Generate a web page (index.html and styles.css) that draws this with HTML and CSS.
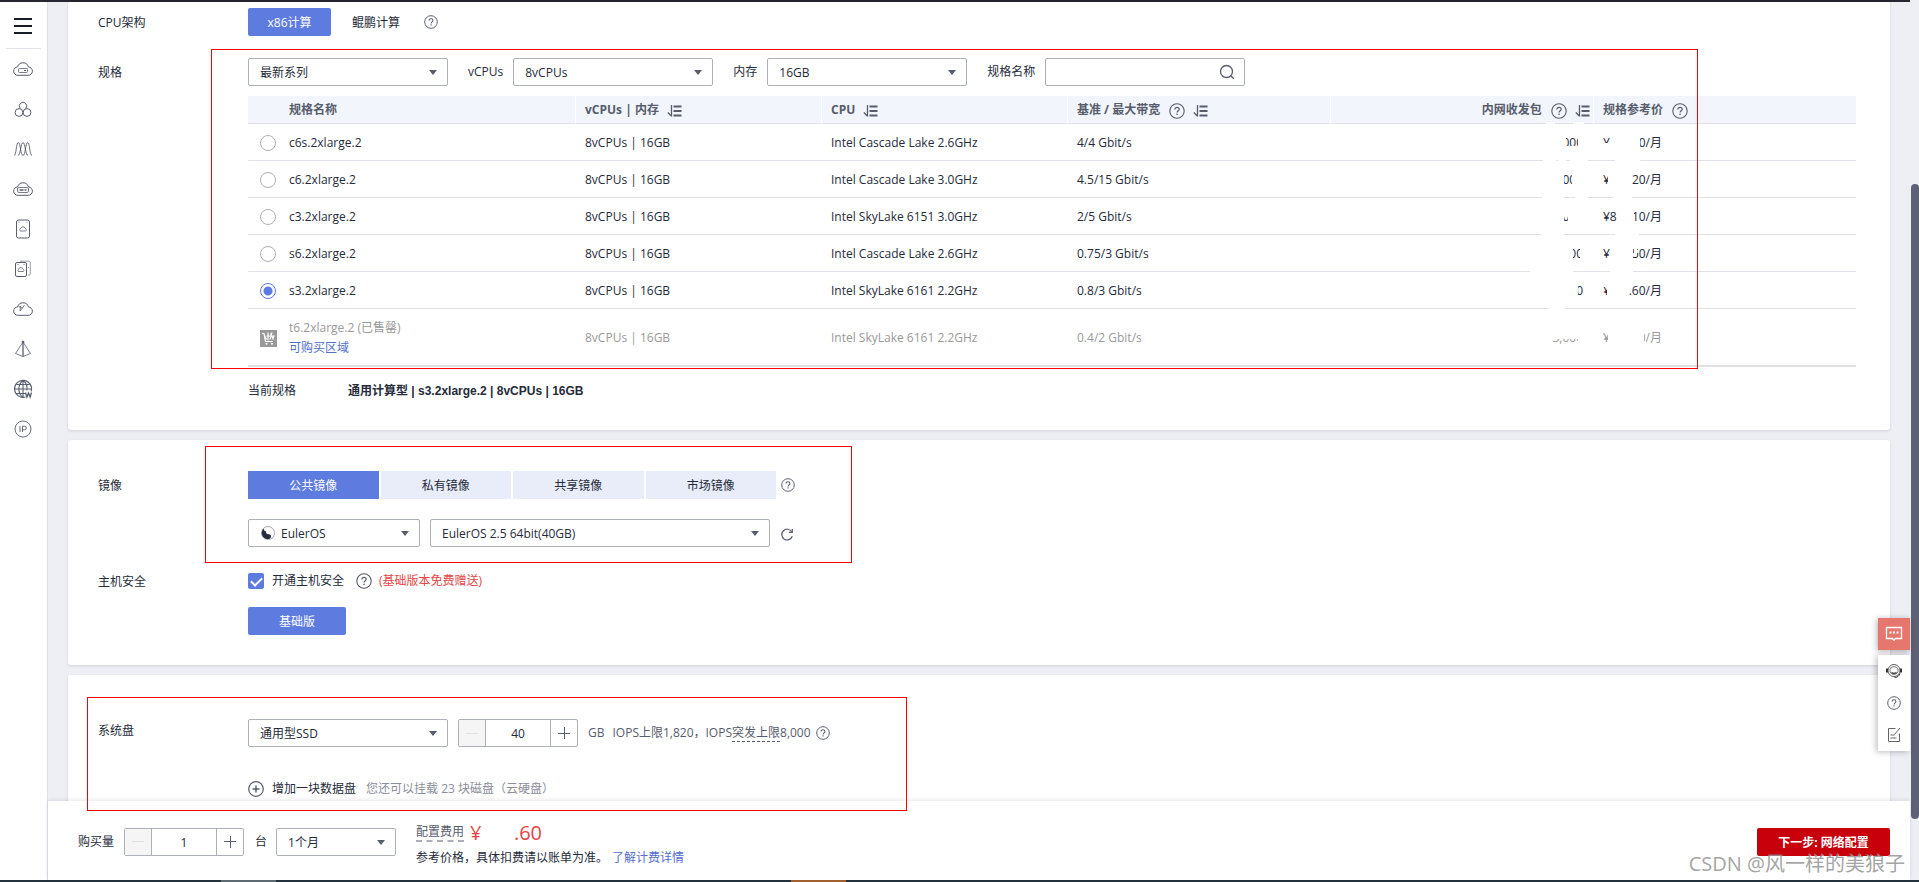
FILE: index.html
```html
<!DOCTYPE html>
<html lang="zh-CN">
<head>
<meta charset="utf-8">
<title>购买弹性云服务器</title>
<link rel="stylesheet" href="styles.css">
</head>
<body>
<svg class="defs" aria-hidden="true">
  <symbol id="help" viewBox="0 0 16 16"><circle cx="8" cy="8" r="7.2" fill="none" stroke="currentColor" stroke-width="1.1"/><path d="M5.8 6.4c0-1.3 1-2.1 2.2-2.1s2.2.8 2.2 2c0 1.5-2.1 1.6-2.1 3.3" fill="none" stroke="currentColor" stroke-width="1.2"/><rect x="7.4" y="10.6" width="1.3" height="1.4" fill="currentColor"/></symbol>
  <symbol id="sort" viewBox="0 0 15 12"><path d="M4.500 0v11.500M.8 7.500l3.500 3.500" fill="none" stroke="currentColor" stroke-width="1.300"/><path d="M6.500 1.500h8M6.500 6h8M6.500 10.500h8" fill="none" stroke="currentColor" stroke-width="1.800"/></symbol>
  <symbol id="cloud" viewBox="0 0 20 16"><path d="M5 14.300A4.200 4.200 0 0 1 4.600 5.900 5.600 5.600 0 0 1 15.400 5.900 4.200 4.200 0 0 1 15 14.300z" fill="none" stroke="currentColor"/></symbol>
</svg>
<div class="topline"></div>
<div class="shell">
  <nav class="sidebar" aria-label="服务列表">
    <button class="menu" aria-label="菜单"><svg width="18" height="16" viewBox="0 0 18 16"><path d="M0 1h18M0 8h18M0 15h18" stroke="#191b27" stroke-width="2"/></svg></button>
    <a href="#" aria-label="弹性云服务器"><svg width="20" height="16"><use href="#cloud"/><rect x="5.500" y="7.500" width="9" height="4" rx="1" fill="none" stroke="currentColor" stroke-width=".8"/><path d="M11 9.500h2" stroke="currentColor"/></svg></a>
    <a href="#" aria-label="弹性伸缩"><svg width="18" height="18" viewBox="0 0 18 18" fill="none" stroke="currentColor"><path d="M6.300 8.500A3.700 3.700 0 1 1 11.700 8.500"/><circle cx="5" cy="12.500" r="3.900"/><circle cx="13" cy="12.500" r="3.900"/></svg></a>
    <a href="#" aria-label="云监控"><svg width="20" height="16" viewBox="0 0 20 16" fill="none" stroke="currentColor" stroke-width=".9"><path d="M1 14.500C3.500 14.500 3 1.500 5.300 1.500S7.500 14.500 10 14.500 12.500 1.500 14.700 1.500 16.500 14.500 19 14.500"/><path d="M5 14.500C7.500 14.500 7.800 1.500 10 1.500S12.500 14.500 15 14.500"/></svg></a>
    <a href="#" aria-label="裸金属服务器"><svg width="20" height="16"><use href="#cloud"/><rect x="4.500" y="6.500" width="11" height="5" rx="1.500" fill="none" stroke="currentColor" stroke-width=".8"/><path d="M6.500 9h7" stroke="currentColor" stroke-width="1.600" stroke-dasharray="4 1"/></svg></a>
    <a href="#" aria-label="云硬盘"><svg width="16" height="20" viewBox="0 0 16 20" fill="none" stroke="currentColor"><rect x="1.500" y="1" width="13" height="18" rx="2"/><path d="M5.500 12a1.500 1.500 0 0 1 .2-2.700 2.500 2.500 0 0 1 4.600 0 1.500 1.500 0 0 1 .2 2.700z" stroke-width=".8"/><path d="M3.500 3h1M11.500 3h1" stroke-width=".8"/></svg></a>
    <a href="#" aria-label="云硬盘备份"><svg width="18" height="18" viewBox="0 0 18 18" fill="none" stroke="currentColor"><rect x="1.500" y="2.500" width="11" height="14" rx="1.500"/><path d="M4.500 11.500a1.300 1.300 0 0 1 .2-2.300 2.300 2.300 0 0 1 4.400 0 1.300 1.300 0 0 1 .2 2.300zM3.500 4.500h1M9.500 4.500h1" stroke-width=".8"/><path d="M6 1.200h9a1.300 1.300 0 0 1 1.300 1.300v11.500a1 1 0 0 1-1 1H14M14 7.500h1" stroke-width=".6"/></svg></a>
    <a href="#" aria-label="云备份"><svg width="20" height="16"><use href="#cloud"/><path d="M5.500 5.500l4 1.500-2.500 3M7 10l.5-5M9.500 7l2-3" fill="none" stroke="currentColor" stroke-width=".8"/></svg></a>
    <a href="#" aria-label="虚拟私有云"><svg width="18" height="18" viewBox="0 0 18 18" fill="none" stroke="currentColor" stroke-width=".8"><path d="M9 2L1.500 13.500 9 16.500l7.500-3z"/><path d="M9 2v14.500" stroke-width="1.300"/><circle cx="9" cy="2" r="1" fill="currentColor"/></svg></a>
    <a href="#" aria-label="域名"><svg width="20" height="20" viewBox="0 0 20 20" fill="none" stroke="currentColor" stroke-width="1.100"><path d="M12.500 18A8.500 8.500 0 1 1 18.200 12.300"/><path d="M10 1.500v17M1.500 10h17M3.300 5.500h13.400M3.300 14.500h9M10 1.500c-5.500 4-5.500 13 0 17M10 1.500c3.500 2.500 4.500 6.500 3.800 10"/><path d="M12.500 13.500l1.400 4.500 1.600-4 1.600 4 1.400-4.500" stroke-width="1.300"/></svg></a>
    <a href="#" aria-label="弹性公网IP"><svg width="18" height="18" viewBox="0 0 18 18" fill="none" stroke="currentColor" stroke-width=".9"><circle cx="9" cy="9" r="8"/><path d="M6 6v6M8.500 12V6.200h2a1.800 1.800 0 0 1 0 3.600h-2"/></svg></a>
  </nav>
  <div class="column">
    <main class="content">
      <section class="card card-spec">
        <div class="row">
          <span class="label">CPU架构</span>
          <div class="field line">
            <button class="btn primary arch">x86计算</button><button class="btn plain">鲲鹏计算</button>
            <svg class="help small"><use href="#help"/></svg>
          </div>
        </div>
        <div class="row">
          <span class="label">规格</span>
          <div class="field">
            <div class="line filters">
              <span class="select w200"><select aria-label="系列"><option>最新系列</option></select></span>
              <label for="vcpus">vCPUs</label>
              <span class="select w200"><select id="vcpus"><option>8vCPUs</option></select></span>
              <label for="mem">内存</label>
              <span class="select w200"><select id="mem"><option>16GB</option></select></span>
              <label for="flavor">规格名称</label>
              <span class="search w200"><input id="flavor" type="text"><svg width="16" height="16" viewBox="0 0 16 16" fill="none" stroke="#575d6c" stroke-width="1.300"><circle cx="7.500" cy="7.500" r="6"/><path d="M11.800 11.800l3 3"/></svg></span>
            </div>
            <div class="tablewrap">
              <table>
                <colgroup><col class="c-name"><col class="c-mid"><col class="c-mid"><col><col><col></colgroup>
                <thead><tr>
                  <th class="first">规格名称</th>
                  <th>vCPUs | 内存 <svg class="sort"><use href="#sort"/></svg></th>
                  <th>CPU <svg class="sort"><use href="#sort"/></svg></th>
                  <th>基准 / 最大带宽 <svg class="help"><use href="#help"/></svg> <svg class="sort"><use href="#sort"/></svg></th>
                  <th class="num">内网收发包 <svg class="help"><use href="#help"/></svg> <svg class="sort"><use href="#sort"/></svg></th>
                  <th>规格参考价 <svg class="help"><use href="#help"/></svg></th>
                </tr></thead>
                <tbody>
                  <tr><td><label class="pick"><input type="radio" name="f">c6s.2xlarge.2</label></td><td>8vCPUs | 16GB</td><td>Intel Cascade Lake 2.6GHz</td><td>4/4 Gbit/s</td><td class="num">000</td><td><span class="price"><span>¥</span><span>0/月</span></span></td></tr>
                  <tr><td><label class="pick"><input type="radio" name="f">c6.2xlarge.2</label></td><td>8vCPUs | 16GB</td><td>Intel Cascade Lake 3.0GHz</td><td>4.5/15 Gbit/s</td><td class="num">000</td><td><span class="price"><span>¥</span><span>20/月</span></span></td></tr>
                  <tr><td><label class="pick"><input type="radio" name="f">c3.2xlarge.2</label></td><td>8vCPUs | 16GB</td><td>Intel SkyLake 6151 3.0GHz</td><td>2/5 Gbit/s</td><td class="num">000</td><td><span class="price"><span>¥8</span><span>10/月</span></span></td></tr>
                  <tr><td><label class="pick"><input type="radio" name="f">s6.2xlarge.2</label></td><td>8vCPUs | 16GB</td><td>Intel Cascade Lake 2.6GHz</td><td>0.75/3 Gbit/s</td><td class="num">000</td><td><span class="price"><span>¥</span><span>50/月</span></span></td></tr>
                  <tr><td><label class="pick"><input type="radio" name="f" checked>s3.2xlarge.2</label></td><td>8vCPUs | 16GB</td><td>Intel SkyLake 6161 2.2GHz</td><td>0.8/3 Gbit/s</td><td class="num">0</td><td><span class="price"><span>¥</span><span>.60/月</span></span></td></tr>
                  <tr class="soldout"><td><div class="pick"><svg width="17" height="17" viewBox="0 0 17 17"><rect width="17" height="17" fill="#999"/><path d="M2 3.500h2l1.500 8h7.500M4.500 5.500l2 4M8 2.500v8M6.500 6h7.500l-1.500 3.500M10.500 3.500l3 6M12 2.500l-2 7" fill="none" stroke="#fff" stroke-width="1.200"/><circle cx="6.500" cy="13.800" r="1" fill="#fff"/><circle cx="12" cy="13.800" r="1" fill="#fff"/></svg><div>t6.2xlarge.2 (已售罄)<br><a href="#">可购买区域</a></div></div></td><td>8vCPUs | 16GB</td><td>Intel SkyLake 6161 2.2GHz</td><td>0.4/2 Gbit/s</td><td class="num">3,000</td><td><span class="price"><span>¥</span><span>0/月</span></span></td></tr>
                </tbody>
              </table>
              <svg class="erased" width="130" height="270" viewBox="0 0 130 270" aria-hidden="true"><path fill="#fff" d="M20 26h9v4h-9zM47 26h11v4h-11zM17 30h13v36h-13zM30 30h10v36h-8v-2h-2zM52 30h10v36h-18V50h8zM40 50h14v8h-14zM89 30h25v36h-25zM76 47h12v10h-12zM16 66h22v37h-22zM46 66h16v37h-13v-14h-3zM87 66h19v37h-19zM82 66h6v30h-6zM15 103h23v37h-23zM38 103h6v18h-6zM54 139h25v3h-25zM42 103h20v35h-20zM95 103h13v37h-13zM89 135h14v5h-14zM104 137h9v4h-9zM4 140h43v37h-43zM54 142h8v30h-8zM84 140h23v37h-23zM108 140h3v18h-3zM22 177h17v37h-17zM39 177h13v30h-13zM76 177h8v14h-8zM81 177h21v30h-21zM10 227h48v16h-48zM52 240h8v12h-8zM82 225h4v22h-4zM80 228h6v4h-6zM86 228h32v22h-32z"/></svg>
            </div>
            <div class="current"><span>当前规格</span><b>通用计算型 | s3.2xlarge.2 | 8vCPUs | 16GB</b></div>
          </div>
        </div>
        <div class="mark mark-spec"></div>
      </section>

      <section class="card card-image">
        <div class="row">
          <span class="label">镜像</span>
          <div class="field">
            <div class="line">
              <div class="tabs"><button class="btn primary">公共镜像</button><button class="btn">私有镜像</button><button class="btn">共享镜像</button><button class="btn">市场镜像</button></div>
              <svg class="help small"><use href="#help"/></svg>
            </div>
            <div class="line images">
              <span class="select os"><svg class="oslogo" viewBox="0 0 14 14"><circle cx="7" cy="7" r="6.500" fill="#fff" stroke="#8a8e99" stroke-width=".8"/><path d="M2.500 2.500C.5 5 0 8.500 2.500 11.200 5 13.800 8.800 13.500 9.800 11.500 10.500 9.500 9.500 8.300 7.800 8.300 5.800 8.500 4.800 7.300 5.200 5.500 4 5.500 3 4.500 2.500 2.500z" fill="#252b3a"/></svg><select aria-label="操作系统"><option>EulerOS</option></select></span>
              <span class="select version"><select aria-label="版本"><option>EulerOS 2.5 64bit(40GB)</option></select></span>
              <button class="icon" aria-label="刷新"><svg width="14" height="14" viewBox="0 0 14 14" fill="none" stroke="#575d6c" stroke-width="1.200"><path d="M11.800 3.800A5.400 5.400 0 1 0 12.300 8.300"/><path d="M12.300 1v3.400H8.800"/></svg></button>
            </div>
          </div>
        </div>
        <div class="row">
          <span class="label">主机安全</span>
          <div class="field">
            <div class="line secure">
              <label class="check"><input type="checkbox" checked>开通主机安全</label>
              <svg class="help"><use href="#help"/></svg><span class="free">(基础版本免费赠送)</span>
            </div>
            <button class="btn primary basic">基础版</button>
          </div>
        </div>
        <div class="mark mark-image"></div>
      </section>

      <section class="card card-disk">
        <div class="row">
          <span class="label">系统盘</span>
          <div class="field">
            <div class="line">
              <span class="select w200"><select aria-label="磁盘类型"><option>通用型SSD</option></select></span>
              <span class="stepper"><button disabled aria-label="减少"></button><input type="text" value="40" aria-label="容量"><button class="plus" aria-label="增加"></button></span>
              <span class="iops"><span>GB</span><span>IOPS上限1,820，IOPS<u>突发上限</u>8,000</span><svg class="help small"><use href="#help"/></svg></span>
            </div>
            <div class="line add">
              <button class="adddisk"><svg width="16" height="16" viewBox="0 0 16 16" fill="none" stroke="#575d6c" stroke-width="1.200"><circle cx="8" cy="8" r="7.300"/><path d="M4.500 8h7M8 4.500v7" stroke-width="1.500"/></svg>增加一块数据盘</button>
              <span class="hint">您还可以挂载 23 块磁盘（云硬盘）</span>
            </div>
          </div>
        </div>
        <div class="mark mark-disk"></div>
      </section>
    </main>

    <footer class="buybar">
      <label for="count">购买量</label>
      <span class="stepper"><button disabled aria-label="减少"></button><input id="count" type="text" value="1"><button class="plus" aria-label="增加"></button></span>
      <span class="unit">台</span>
      <span class="select month"><select aria-label="购买时长"><option>1个月</option></select></span>
      <div class="cost">
        <div class="total"><u>配置费用</u><span class="amount"><span>¥</span><span>.60</span></span></div>
        <div>参考价格，具体扣费请以账单为准。<a href="#">了解计费详情</a></div>
      </div>
      <button class="btn next">下一步: 网络配置</button>
    </footer>
    <aside class="float">
      <button class="chat" aria-label="咨询"><svg width="18" height="16" viewBox="0 0 18 16" fill="none" stroke="#fff" stroke-width="1.300"><path d="M1.500 1.500h15v11h-6L9 14.200 7.500 12.500h-6z"/><path d="M4.500 6.500h9" stroke-width="1.800" stroke-dasharray="2 1.500"/></svg></button>
      <div class="tools">
        <button aria-label="客服"><svg width="16" height="16" viewBox="0 0 16 16" fill="none" stroke="#333"><circle cx="8" cy="7.500" r="6" stroke-width=".8"/><path d="M4 6.500a4.200 4.200 0 0 1 8 0v2a4.200 4.200 0 0 1-8 0z" stroke-width=".7"/><path d="M1 5.500v4M15 5.500v4" stroke-width="2"/><path d="M5.500 9.500q2.500 1.800 5 0" stroke-width="1.300"/><path d="M8.500 14.500c3 0 4.500-1.500 5.500-4"/></svg></button>
        <button aria-label="帮助"><svg class="help small"><use href="#help"/></svg></button>
        <button aria-label="反馈"><svg width="14" height="16" viewBox="0 0 14 16" fill="none" stroke="#666"><path d="M8.500 1.500h-7v13h11v-8M13 1L7.500 7.500M3.500 8h4M3.500 11h6"/></svg></button>
      </div>
    </aside>
  </div>
  <div class="scroll"><div class="thumb"></div></div>
</div>
<div class="taskbar"><i class="t1"></i><i class="t2"></i></div>
<div class="watermark">CSDN @风一样的美狼子</div>
</body>
</html>
```
FILE: styles.css
```css
* { box-sizing: border-box; }
body {
  margin: 0; height: 100vh; overflow: hidden; position: relative;
  display: flex; flex-direction: column;
  background: #eeeff5; color: #252b3a;
  font: 12px/20px "Open Sans", "Noto Sans CJK SC", sans-serif;
}
button, input, select { font: inherit; color: inherit; margin: 0; }
button { border: 0; background: none; padding: 0; }
a { color: #526ecc; text-decoration: none; }
svg { flex: none; }
.defs { position: absolute; width: 0; height: 0; }
.topline { height: 2px; background: #252630; margin-right: 9px; }
.shell { flex: 1; min-height: 0; display: flex; }

.sidebar { width: 48px; padding-right: 1px; background: #fff; border-right: 1px solid #dfe1e6; display: flex; flex-direction: column; align-items: center; color: #575d6c; }
.sidebar .menu { width: 35px; height: 47px; padding-top: 2px; border-bottom: 1px solid #dfe1e6; display: flex; align-items: center; justify-content: center; }
.sidebar a { height: 40px; display: flex; align-items: center; color: inherit; }

.column { flex: 1; min-width: 0; display: flex; flex-direction: column; position: relative; }
.content { flex: 1; min-height: 0; padding: 0 20px; }
.card { position: relative; background: #fff; border-radius: 3px; box-shadow: 0 1px 3px rgba(0,0,0,.12); padding: 31px 34px 30px 30px; margin-bottom: 10px; }
.card-spec { padding-top: 6px; }
.card-disk { padding-top: 44px; }
.row { display: flex; align-items: flex-start; }
.row + .row { margin-top: 20px; }
.label { width: 150px; line-height: 30px; flex: none; }
.card-disk .label { line-height: 24px; }
.field { flex: 1; min-width: 0; }
.line { display: flex; align-items: center; min-height: 28px; }

.btn { height: 28px; padding-top: 2px; background: #e9edfa; border-radius: 2px; text-align: center; }
.primary { background: #5e7ce0; color: #fff; }
.plain { background: none; padding: 2px 24px 0 21px; }
.arch { width: 83px; }
.basic { width: 98px; margin-top: 12px; display: block; }
.help { width: 16px; height: 16px; color: #575d6c; vertical-align: middle; }
.help.small { width: 14px; height: 14px; }
th .help { margin-left: 6px; }
.sort { width: 15px; height: 12px; color: #575d6c; vertical-align: middle; margin-left: 5px; }

.select { position: relative; display: inline-flex; height: 28px; }
.select select, .search input { appearance: none; width: 100%; height: 28px; border: 1px solid #adb0b8; border-radius: 2px; background: #fff; padding: 2px 30px 0 11px; outline: 0; }
.select::after { content: ""; position: absolute; right: 11px; top: 12px; border: 4px solid transparent; border-top: 5px solid #575d6c; border-bottom: 0; pointer-events: none; }
.w200 { width: 200px; }
.search { position: relative; height: 28px; }
.search svg { position: absolute; right: 10px; top: 6px; }
.filters label { margin: 0 10px 0 20px; }

.tablewrap { position: relative; margin-top: 10px; }
table { width: 100%; border-collapse: separate; border-spacing: 0; table-layout: fixed; }
.c-name { width: 327px; }
.c-mid { width: 246px; }
th { height: 28px; background: #f2f5fc; color: #575d6c; text-align: left; padding: 1px 10px 0; border-bottom: 1px solid #dfe1e6; font-weight: 700; white-space: nowrap; }
th + th { border-left: 1px solid #fff; padding-left: 9px; }
th.first { padding-left: 41px; }
td { height: 37px; padding: 2px 10px 0; border-bottom: 1px solid #dfe1e6; }
td:first-child { padding-left: 12px; }
.num { text-align: right; }
th.num { padding-right: 3px; }
.pick { display: flex; align-items: center; gap: 13px; }
.pick svg { margin-right: -1px; }
.pick input { appearance: none; width: 16px; height: 16px; border: 1px solid #adb0b8; border-radius: 50%; background: #fff; }
.pick input:checked { border-color: #5e7ce0; background: radial-gradient(circle, #5e7ce0 4px, #fff 5px); }
.soldout td { height: 58px; color: #999; border-bottom-width: 2px; }
.price { display: flex; justify-content: space-between; width: 59px; }
.erased { position: absolute; right: 200px; top: 0; }
.current { display: flex; margin-top: 14px; margin-bottom: -1px; }
.current span { width: 100px; }
.current b { font-family: "Liberation Sans", "Noto Sans CJK SC", sans-serif; }

.tabs { display: flex; gap: 2px; width: 528px; margin-right: 5px; }
.tabs .btn { flex: 1; border-radius: 0; }
.images { margin-top: 20px; gap: 10px; }
.os { width: 172px; }
.os select { padding-left: 32px; }
.oslogo { position: absolute; left: 13px; top: 7px; width: 14px; height: 14px; }
.version { width: 340px; }
.icon { display: flex; padding-top: 3px; }
.check { display: flex; align-items: center; gap: 8px; margin-right: 12px; }
.check input { appearance: none; width: 16px; height: 16px; border-radius: 2px; background: #5e7ce0; display: grid; place-items: center; }
.check input::after { content: ""; width: 9px; height: 5px; border: solid #fff; border-width: 0 0 2px 2px; transform: translateY(-1px) rotate(-45deg); }
.free { color: #e54545; margin-left: 7px; }

.stepper { display: flex; width: 120px; height: 28px; border: 1px solid #adb0b8; border-radius: 2px; background: #fff; }
.stepper button { width: 26px; display: grid; place-items: center; color: #575d6c; }
.stepper button:disabled { background: #f5f5f6; color: #dfe1e6; }
.stepper button::before, .stepper .plus::after { content: ""; width: 12px; height: 1px; background: currentColor; grid-area: 1 / 1; }
.stepper .plus::after { width: 1px; height: 12px; }
.stepper input { flex: 1; min-width: 0; border: solid #adb0b8; border-width: 0 1px; text-align: center; padding: 2px 0 0; background: none; outline: 0; }
.card-disk .stepper { margin: 0 10px; }
.iops { display: flex; align-items: center; color: #575d6c; }
.iops span { margin-right: 8px; }
.iops span + span { margin-right: 5px; }
u { text-decoration: none; border-bottom: 1px dashed #575d6c; }
.add { margin-top: 28px; gap: 10px; }
.adddisk { display: flex; align-items: center; gap: 8px; }
.hint { color: #8a8e99; }

.mark { position: absolute; border: 1px solid #f00; pointer-events: none; z-index: 3; }
.mark-spec { left: 143px; right: 192px; top: 47px; height: 320px; }
.mark-image { left: 137px; top: 6px; width: 647px; height: 117px; }
.mark-disk { left: 19px; top: 22px; width: 820px; height: 114px; }

.buybar { position: relative; z-index: 1; height: 79px; flex: none; background: #fff; box-shadow: 0 -1px 4px rgba(0,0,0,.1); display: flex; align-items: center; padding: 2px 20px 0 30px; }
.buybar label { margin-right: 10px; }
.unit { margin: 0 9px 0 11px; }
.month { width: 120px; margin-right: 20px; }
.cost { line-height: 20px; padding-top: 3px; }
.total { display: flex; align-items: center; height: 30px; color: #575d6c; }
.total u { line-height: 16px; border-bottom-width: 2px; border-color: #adb0b8; }
.amount { display: flex; justify-content: space-between; width: 72px; margin-left: 6px; color: #e54545; font-size: 20px; }
.cost a { margin-left: 4px; }
.next { width: 133px; margin-left: auto; background: #c7000b; color: #fff; font-weight: 700; }

.float { position: absolute; right: 0; top: 616px; width: 32px; z-index: 2; display: flex; flex-direction: column; gap: 5px; }
.float button { width: 32px; height: 32px; display: grid; place-items: center; }
.chat { background: #e6776e; box-shadow: -1px 1px 6px rgba(0,0,0,.3); }
.tools { background: #fff; box-shadow: -2px 1px 6px rgba(0,0,0,.25); }

.scroll { width: 9px; padding: 182px 0 0 1px; }
.thumb { height: 635px; background: #5e6176; border-radius: 4px; }
.taskbar { height: 2px; background: #23323c; position: relative; }
.taskbar i { position: absolute; top: 0; height: 2px; width: 55px; }
.t1 { left: 221px; background: #5f6c74; }
.t2 { left: 791px; background: #a4622f; }
.watermark { position: absolute; right: 14px; bottom: 3px; z-index: 5; font-size: 20px; line-height: 30px; color: rgba(140,140,140,.8); text-shadow: 1px 1px 0 rgba(255,255,255,.6); }
```
